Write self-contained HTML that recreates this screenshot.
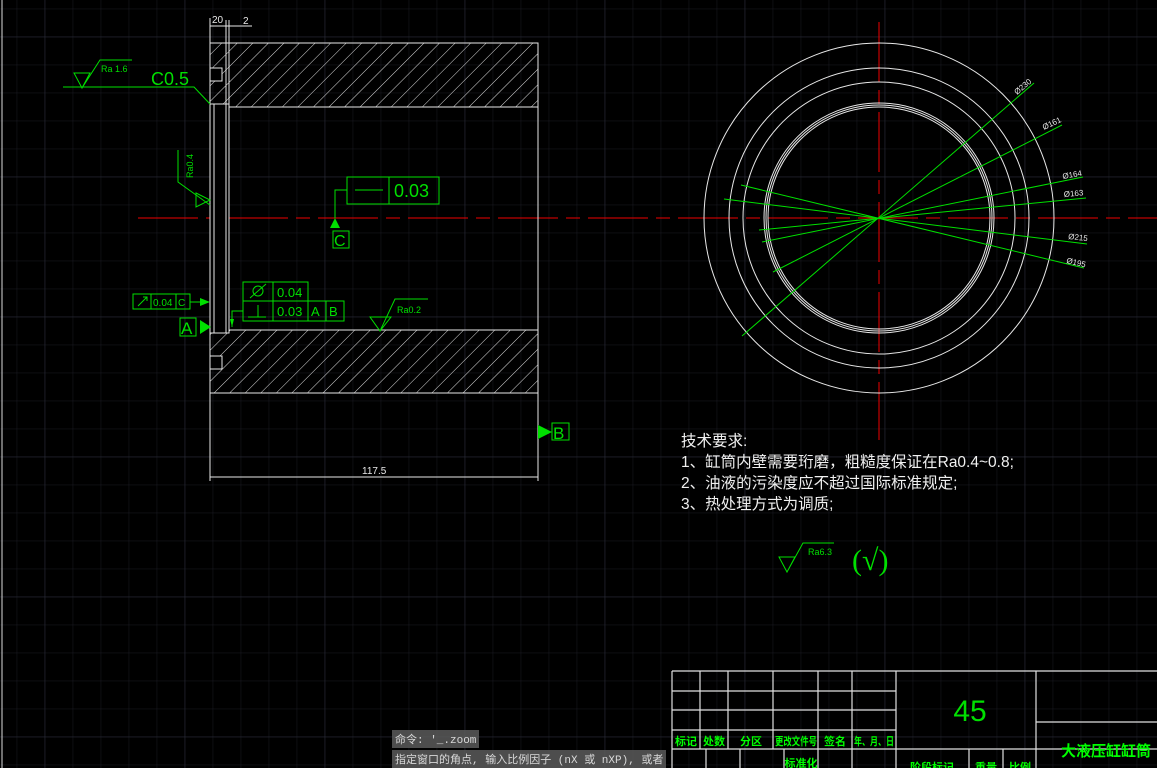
<!DOCTYPE html>
<html><head><meta charset="utf-8"><style>
html,body{margin:0;padding:0;background:#000;overflow:hidden}
svg{display:block}
.cmd{position:absolute;left:392px;background:rgba(90,90,90,.85);color:#d8d8d8;font:11px "Liberation Mono","Noto Sans CJK SC",monospace;padding:1px 3px;white-space:nowrap}
</style></head><body>
<svg width="1157" height="768" xmlns="http://www.w3.org/2000/svg" font-family="Liberation Sans, Noto Sans CJK SC, sans-serif">
<defs>
<pattern id="g" width="28" height="28" patternUnits="userSpaceOnUse" x="16.7" y="8.7">
<path d="M0 0V28M0 0H28" stroke="#1a1b23" stroke-width="1" fill="none"/></pattern>
<pattern id="G" width="140" height="140" patternUnits="userSpaceOnUse" x="44.7" y="36.7">
<path d="M0 0V140M0 0H140" stroke="#2b2d39" stroke-width="1" fill="none"/></pattern>
<pattern id="h" width="11" height="11" patternUnits="userSpaceOnUse" patternTransform="rotate(45)">
<path d="M0 0V11" stroke="#ddd" stroke-width="1"/></pattern>
</defs>
<rect width="1157" height="768" fill="#000"/>
<rect width="1157" height="768" fill="url(#g)"/>
<rect width="1157" height="768" fill="url(#G)"/>
<line x1="2" y1="0" x2="2" y2="768" stroke="#ddd"/>

<line x1="138" y1="218" x2="1157" y2="218" stroke="#e00" stroke-dasharray="60,8,14,8"/>
<line x1="879" y1="22" x2="879" y2="440" stroke="#e00" stroke-dasharray="60,8,14,8"/>

<g stroke="#e8e8e8" fill="none" stroke-width="1">
<rect x="210" y="43" width="328" height="64" fill="url(#h)"/>
<rect x="210" y="330" width="328" height="63" fill="url(#h)"/>
<rect x="210" y="43" width="328" height="350"/>
<line x1="210" y1="107" x2="538" y2="107"/>
<line x1="210" y1="330" x2="538" y2="330"/>
<rect x="210" y="68" width="12" height="13" fill="#000"/>
<rect x="210" y="356" width="12" height="13" fill="#000"/>
<rect x="210" y="104" width="19" height="229" fill="#000"/>
<line x1="214" y1="104" x2="214" y2="333"/>
<line x1="226" y1="20" x2="226" y2="333"/>
<line x1="229" y1="20" x2="229" y2="333"/>
<line x1="210" y1="18" x2="210" y2="43"/>
<line x1="210" y1="26" x2="252" y2="26"/>
<line x1="210" y1="393" x2="210" y2="481"/>
<line x1="538" y1="393" x2="538" y2="481"/>
<line x1="210" y1="477" x2="538" y2="477"/>
</g>
<g fill="#e8e8e8" font-size="10">
<text x="212" y="23">20</text><text x="243" y="24">2</text>
<text x="362" y="474">117.5</text>
</g>

<g stroke="#00e000" fill="none" stroke-width="1">
<path d="M63 87H194L210 104"/>
<path d="M74 73H90L82 88ZM82 88L100 60H132"/>
<path d="M178 150V182L210 205"/>
<path d="M196 193L210 200L196 207Z"/>
<rect x="347" y="177" width="92" height="27"/><line x1="389" y1="177" x2="389" y2="204"/>
<line x1="355" y1="190" x2="383" y2="190"/>
<path d="M347 190H335V218"/>
<rect x="333" y="231" width="16" height="17"/>
<rect x="133" y="294" width="57" height="15"/><line x1="151" y1="294" x2="151" y2="309"/><line x1="176" y1="294" x2="176" y2="309"/>
<path d="M138 306L147 297M143 297H147V301"/>
<line x1="190" y1="302" x2="200" y2="302"/>
<rect x="180" y="318" width="16" height="18"/>
<rect x="243" y="282" width="65" height="19"/><line x1="273" y1="282" x2="273" y2="301"/>
<rect x="243" y="301" width="101" height="20"/><line x1="273" y1="301" x2="273" y2="321"/><line x1="308" y1="301" x2="308" y2="321"/><line x1="326" y1="301" x2="326" y2="321"/>
<circle cx="258" cy="291" r="5"/><line x1="250" y1="298" x2="266" y2="284"/>
<path d="M248 317H266M258 317V305"/>
<path d="M243 311H232V327"/>
<path d="M370 317H391L380 331ZM380 331L395 299H428"/>
<path d="M779 557H795L787 572ZM787 572L803 543H834"/>
<rect x="552" y="423" width="17" height="17"/>
</g>
<g fill="#00e000">
<path d="M335 218L330 228H340Z"/>
<path d="M200 298L210 302L200 306Z"/>
<path d="M200 320L200 334L211 327Z"/>
<path d="M538 425L538 439L552 432Z"/>
<path d="M230 319L234 319L232 327Z"/>
</g>
<g fill="#00e000">
<text x="101" y="72" font-size="9">Ra 1.6</text>
<text x="151" y="85" font-size="18">C0.5</text>
<text x="193" y="178" font-size="9" transform="rotate(-90 193 178)">Ra0.4</text>
<text x="394" y="197" font-size="18">0.03</text>
<text x="334" y="246" font-size="16">C</text>
<text x="153" y="306" font-size="10">0.04</text><text x="178" y="306" font-size="10">C</text>
<text x="181" y="334" font-size="17">A</text>
<text x="277" y="297" font-size="13">0.04</text>
<text x="277" y="316" font-size="13">0.03</text><text x="311" y="316" font-size="13">A</text><text x="329" y="316" font-size="13">B</text>
<text x="397" y="313" font-size="9">Ra0.2</text>
<text x="553" y="439" font-size="17">B</text>
<text x="808" y="555" font-size="9">Ra6.3</text>
<text x="852" y="570" font-size="30" font-family="Liberation Serif, serif">(√)</text>
</g>

<g stroke="#e8e8e8" fill="none">
<circle cx="879" cy="218" r="175"/>
<circle cx="879" cy="218" r="150"/>
<circle cx="879" cy="218" r="136"/>
<circle cx="879" cy="218" r="115"/>
<circle cx="879" cy="218" r="113"/>
<circle cx="879" cy="218" r="111"/>
</g>
<g stroke="#00e000" stroke-width="1">
<line x1="1034" y1="83" x2="742" y2="336"/>
<line x1="1062" y1="125" x2="773" y2="272"/>
<line x1="1083" y1="177" x2="762" y2="242"/>
<line x1="1086" y1="198" x2="759" y2="230"/>
<line x1="1087" y1="244" x2="724" y2="199"/>
<line x1="1084" y1="268" x2="741" y2="185"/>
</g>
<g fill="#e8e8e8" font-size="8">
<text transform="translate(1017,95) rotate(-40)">Ø230</text>
<text transform="translate(1044,130) rotate(-25)">Ø161</text>
<text transform="translate(1063,179) rotate(-10)">Ø164</text>
<text transform="translate(1064,197) rotate(-5)">Ø163</text>
<text transform="translate(1068,239) rotate(6)">Ø215</text>
<text transform="translate(1066,263) rotate(13)">Ø195</text>
</g>

<g fill="#f0f0f0" font-size="15.5">
<text x="681" y="446">技术要求:</text>
<text x="681" y="467">1、缸筒内壁需要珩磨，粗糙度保证在Ra0.4~0.8;</text>
<text x="681" y="488">2、油液的污染度应不超过国际标准规定;</text>
<text x="681" y="509">3、热处理方式为调质;</text>
</g>

<g stroke="#e0e0e0" fill="none" stroke-width="1.2">
<path d="M672 671H1157M672 691H896M672 710H896M672 730H896M672 749H1157M1036 722H1157"/>
<path d="M672 671V768M700 671V749M728 671V749M773 671V749M818 671V768M852 671V768M896 671V768M1036 671V768"/>
<path d="M706 749V768M740 749V768M784 749V768M969 749V768M1003 749V768"/>
</g>
<text x="970" y="721" fill="#00e000" font-size="30" font-weight="300" text-anchor="middle">45</text>
<g fill="#00ff00" font-size="11" font-weight="bold" text-anchor="middle">
<text x="686" y="745">标记</text><text x="714" y="745">处数</text><text x="751" y="745">分区</text>
<text x="796" y="745" textLength="42" lengthAdjust="spacingAndGlyphs">更改文件号</text><text x="835" y="745">签名</text><text x="874" y="745" textLength="40" lengthAdjust="spacingAndGlyphs">年、月、日</text>
<text x="801" y="767">标准化</text><text x="932" y="771">阶段标记</text><text x="986" y="771">重量</text><text x="1020" y="771">比例</text>
<text x="1106" y="756" font-size="15">大液压缸缸筒</text>
</g>
</svg>
<div class="cmd" style="top:730px">命令: '_.zoom</div>
<div class="cmd" style="top:750px">指定窗口的角点, 输入比例因子 (nX 或 nXP), 或者</div>
</body></html>
